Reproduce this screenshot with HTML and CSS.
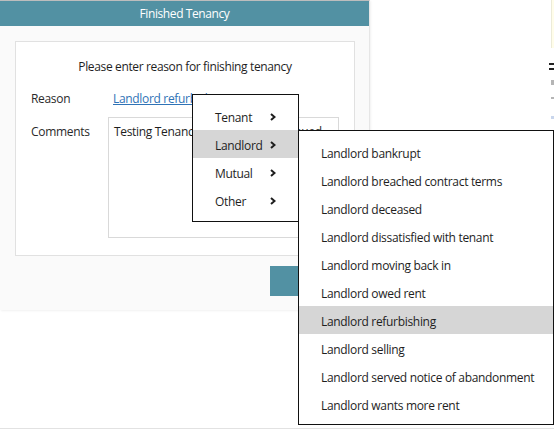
FILE: index.html
```html
<!DOCTYPE html>
<html>
<head>
<meta charset="utf-8">
<link rel="stylesheet" href="styles.css">
</head>
<body>
<div class="screen">
  <div class="dialog">
    <div class="titlebar">Finished Tenancy</div>
    <div class="dialog-body">
      <div class="panel">
        <div class="prompt">Please enter reason for finishing tenancy</div>
        <div class="row reason-row">
          <span class="label">Reason</span>
          <a class="link" href="#">Landlord refurbishing</a>
        </div>
        <div class="row comments-row">
          <span class="label">Comments</span>
          <div class="textarea">Testing Tenancy has been discontinued</div>
        </div>
      </div>
      <div class="actions"><button class="btn">OK</button></div>
    </div>
  </div>
  <div class="edge">
    <div class="edge-note"></div>
    <div class="edge-mark dark m1"></div>
    <div class="edge-mark dark m2"></div>
    <div class="edge-mark grey m3"></div>
    <div class="edge-mark grey m4"></div>
    <div class="edge-mark blue m5"></div>
  </div>

  <div class="menu menu-main">
    <div class="item"><span class="item-text">Tenant</span><svg class="chev" width="6" height="8" viewBox="0 0 6 8"><polyline points="1,1 4.5,4 1,7" /></svg></div>
    <div class="item active"><span class="item-text">Landlord</span><svg class="chev" width="6" height="8" viewBox="0 0 6 8"><polyline points="1,1 4.5,4 1,7" /></svg></div>
    <div class="item"><span class="item-text">Mutual</span><svg class="chev" width="6" height="8" viewBox="0 0 6 8"><polyline points="1,1 4.5,4 1,7" /></svg></div>
    <div class="item"><span class="item-text">Other</span><svg class="chev" width="6" height="8" viewBox="0 0 6 8"><polyline points="1,1 4.5,4 1,7" /></svg></div>
  </div>

  <div class="menu menu-sub">
    <div class="item">Landlord bankrupt</div>
    <div class="item">Landlord breached contract terms</div>
    <div class="item">Landlord deceased</div>
    <div class="item">Landlord dissatisfied with tenant</div>
    <div class="item">Landlord moving back in</div>
    <div class="item">Landlord owed rent</div>
    <div class="item active">Landlord refurbishing</div>
    <div class="item">Landlord selling</div>
    <div class="item">Landlord served notice of abandonment</div>
    <div class="item">Landlord wants more rent</div>
  </div>
</div>
</body>
</html>
```

FILE: styles.css
```css
* { box-sizing: border-box; }

html, body {
  margin: 0;
  padding: 0;
  background: #ffffff;
}

body {
  font-family: "Open Sans", "Noto Sans", sans-serif;
  font-size: 12px;
  letter-spacing: -0.32px;
  color: #1e1e1e;
}

.screen {
  position: relative;
  width: 554px;
  height: 429px;
  overflow: hidden;
  border-bottom: 1px solid #e2e2e2;
  display: flex;
  align-items: flex-start;
}

.dialog {
  width: 370px;
  height: 310px;
  background: #fafafa;
  border-top: 1px solid #bdbdbd;
  border-right: 1px solid #e6e6e6;
  box-shadow: 1px 1px 2px rgba(0,0,0,0.06);
  display: flex;
  flex-direction: column;
}

.titlebar {
  height: 25px;
  background: #5291a3;
  color: #ffffff;
  font-size: 12px;
  letter-spacing: -0.4px;
  line-height: 26px;
  text-align: center;
}

.dialog-body {
  padding: 15px 14px 14px 15px;
  display: flex;
  flex-direction: column;
}

.panel {
  height: 215px;
  background: #ffffff;
  border: 1px solid #e1e1e1;
  padding: 17px 15px 0 15px;
  display: flex;
  flex-direction: column;
}

.prompt {
  text-align: center;
  line-height: 16px;
  letter-spacing: -0.36px;
  color: #1e1e1e;
}

.row {
  display: flex;
  align-items: flex-start;
}

.label {
  width: 77px;
  flex: none;
  line-height: 16px;
  color: #2a2a2a;
}

.reason-row {
  margin-top: 16px;
}

.link {
  padding-left: 5px;
  color: #2f73b6;
  text-decoration: underline;
  line-height: 16px;
}

.comments-row {
  margin-top: 10px;
}

.comments-row .label {
  margin-top: 7px;
}

.textarea {
  flex: 1;
  height: 121px;
  border: 1px solid #d9d9d9;
  padding: 6px 5px 0 5px;
  line-height: 16px;
  white-space: nowrap;
  overflow: hidden;
  color: #1e1e1e;
}

.actions {
  margin-top: 10px;
  display: flex;
  justify-content: flex-end;
}

.btn {
  width: 85px;
  height: 30px;
  border: none;
  background: #5291a3;
  color: #ffffff;
  font: inherit;
}

.edge {
  margin-left: auto;
  width: 6px;
  height: 130px;
  position: relative;
}

.edge-note {
  margin-left: 3px;
  height: 48px;
  background: #fffdea;
  border-left: 1px solid #ecebd8;
}

.edge-mark {
  position: absolute;
  right: 0;
  height: 2px;
}
.edge-mark.dark { background: #222; width: 5px; }
.edge-mark.grey { background: #b5b5b5; width: 3px; }
.edge-mark.blue { background: #c9d6ec; width: 3px; }
.m1 { top: 63px; }
.m2 { top: 68px; }
.m3 { top: 80px; height: 5px; }
.m4 { top: 97px; }
.m5 { top: 116px; height: 3px; }

.menu {
  position: absolute;
  background: #ffffff;
  border: 1px solid #111111;
  padding: 7px 0;
}

.menu-main {
  left: 192px;
  top: 94px;
  width: 107px;
}

.menu-sub {
  left: 298px;
  top: 130px;
  width: 256px;
  padding-bottom: 6px;
}

.item {
  height: 28px;
  padding-top: 2px;
  padding-left: 22px;
  color: #1e1e1e;
  display: flex;
  align-items: center;
  white-space: nowrap;
}

.item.active {
  background: #d6d6d6;
}

.item-text {
  width: 55px;
  flex: none;
}

.chev {
  fill: none;
  stroke: #1e1e1e;
  stroke-width: 2;
  margin-left: 0;
}
```
